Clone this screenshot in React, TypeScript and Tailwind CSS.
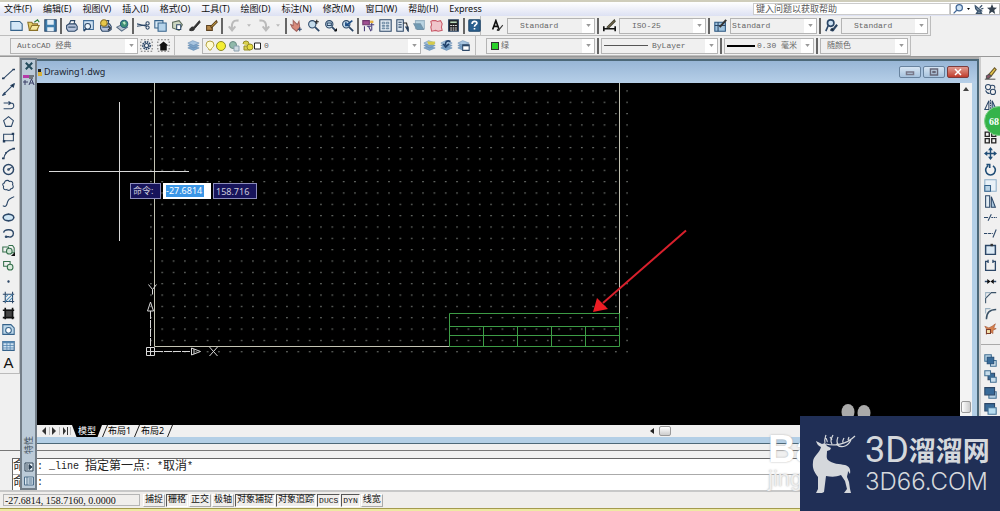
import React from "react";

type IconDef = { label: string; art: React.ReactNode };

const UI = "font-['Noto_Sans','Noto_Sans_CJK_SC',sans-serif]";
const MONO = "font-['Liberation_Mono','Noto_Sans_CJK_SC',monospace]";

function Icon({ children }: { children: React.ReactNode }) {
  return (
    <svg viewBox="0 0 16 16" className="size-[13px]" fill="none" stroke="#2c4767" strokeWidth="1.3">
      {children}
    </svg>
  );
}

function Tool({ def, wide }: { def: IconDef; wide?: boolean }) {
  return (
    <button
      aria-label={def.label}
      className={"flex h-4 shrink-0 items-center justify-center " + (wide ? "w-full" : "w-[17px]")}
    >
      <Icon>{def.art}</Icon>
    </button>
  );
}

const magnifier = (
  <>
    <circle cx="6.5" cy="6.5" r="4.5" fill="#c5dcec" />
    <path d="M10 10l5 5" strokeWidth="2.2" />
  </>
);
const printer = (
  <>
    <path d="M5 7L7 2h5l-1 5" fill="#fff" />
    <path d="M2 8l3-2h8l2 3v4l-3 2H4l-2-3z" fill="#b6c3db" />
    <path d="M4 10h9" />
  </>
);

const fileTools: IconDef[] = [
  { label: "新建", art: <path d="M1 3h11l3 3v8H1z" fill="#d4e7f7" stroke="#35628a" /> },
  {
    label: "打开",
    art: (
      <>
        <path d="M1 4h5l1 2h6v8H3z" fill="#e6cf6b" stroke="#8b7126" />
        <path d="M3 14l3-6h9l-3 6z" fill="#f6e9a0" stroke="#8b7126" />
        <path d="M9 4l4-3 2 3" stroke="#2a7a3a" />
      </>
    ),
  },
  {
    label: "保存",
    art: (
      <>
        <path d="M1 1h14v14H1z" fill="#3f7fae" />
        <path d="M4 1h8v6H4zM4 10h8v5H4z" fill="#e4eef6" stroke="none" />
      </>
    ),
  },
];
const printTools: IconDef[] = [
  { label: "打印", art: printer },
  {
    label: "打印预览",
    art: (
      <>
        <path d="M2 2h12v11H2z" fill="#cfe2f3" stroke="#3f6c97" />
        <circle cx="7" cy="9" r="3.5" fill="#eef6fc" />
        <path d="M5 12l-3 3" strokeWidth="2" />
      </>
    ),
  },
  {
    label: "发布",
    art: (
      <>
        {printer}
        <circle cx="6" cy="5" r="4" fill="#e8c84a" stroke="#8b7126" />
        <path d="M11 8l3 3-3 3" stroke="#222" />
      </>
    ),
  },
  {
    label: "三维 DWF",
    art: (
      <>
        <path d="M1 10l8-4 5 4-7 5z" fill="#b9c4d2" stroke="#5b6f86" />
        <circle cx="10" cy="6" r="4.5" fill="#3f8f76" stroke="#2a5f80" />
        <path d="M8 4l3-1 1 3-2 1z" fill="#bfe6c6" stroke="none" />
      </>
    ),
  },
];
const editTools: IconDef[] = [
  {
    label: "剪切",
    art: (
      <>
        <path d="M0 6l12 3M0 9l12-2" />
        <circle cx="13" cy="5.500" r="2" />
        <circle cx="13" cy="10.500" r="2" />
      </>
    ),
  },
  {
    label: "复制",
    art: (
      <>
        <path d="M1 2h10v9H1z" fill="#d9eaf6" stroke="#35628a" />
        <path d="M5 5h10v10H5z" fill="#b5d3ea" stroke="#35628a" />
      </>
    ),
  },
  {
    label: "粘贴",
    art: (
      <>
        <path d="M2 4l8-2 4 5-4 7-8-3z" fill="#cdd7c3" stroke="#5a6a5a" />
        <path d="M7 7h5v6H7z" fill="#fff" />
      </>
    ),
  },
  { label: "特性匹配", art: <path d="M2 14c0-3 3-5 5-4l7-8 1 2-7 8c0 2-3 3-6 2z" fill="#333" stroke="#222" strokeWidth="1" /> },
  {
    label: "块编辑器",
    art: (
      <>
        <path d="M2 8h7v6H2z" fill="#b7894a" stroke="#5b4122" />
        <path d="M7 9l7-7 1 2-7 7z" fill="#e2b53f" stroke="#5b4122" />
      </>
    ),
  },
];
const zoomTools: IconDef[] = [
  {
    label: "实时平移",
    art: (
      <>
        <path d="M4 2l5 5 2-4 1 8-4 4-5-4-2-4 3 1z" fill="#d88a7b" stroke="#a4655f" />
        <path d="M12 10v5M9.500 12.500h5" stroke="#27446b" />
      </>
    ),
  },
  { label: "实时缩放", art: <>{magnifier}<path d="M12 1v5M9.500 3.500h5" stroke="#222" /></> },
  { label: "窗口缩放", art: <>{magnifier}<path d="M4 5h5v3H4z" /><path d="M12 15h4v-4z" fill="#111" stroke="none" /></> },
  { label: "缩放上一个", art: <>{magnifier}<path d="M14 2L6 8m0-4v4h4" strokeWidth="2" stroke="#1d4d85" /></> },
];
const panelTools: IconDef[] = [
  {
    label: "特性",
    art: (
      <>
        <path d="M1 2h8v5H1z" fill="#a04f92" stroke="#6d356a" />
        <path d="M6 9h5M3 9v6M8 9l3 6M12 3v11M10 7h5" stroke="#443a78" />
        <path d="M10 2h4v3h-4z" fill="#e5b03c" stroke="none" />
      </>
    ),
  },
  {
    label: "设计中心",
    art: (
      <>
        <path d="M1 1h14v14H1z" fill="#e2eaf2" />
        <path d="M4 4h3v2H4zM9 4h3v2H9zM4 8h3v1H4zM9 8h3v1H9zM4 11h3v1H4zM9 11h3v1H9z" stroke="#4b6d8d" strokeWidth="0.9" />
      </>
    ),
  },
  {
    label: "工具选项板",
    art: (
      <>
        <path d="M1 1h8v14H1z" fill="#dbe6f0" />
        <path d="M3 4h4M3 7h4M3 10h4" />
        <path d="M9 5h4l2 9" stroke="#222" />
        <path d="M12 10h3v5z" fill="#222" />
      </>
    ),
  },
  {
    label: "图纸集",
    art: (
      <>
        <path d="M3 2h11v10H3z" fill="#b9d4e2" stroke="#9ab3c3" />
        <path d="M1 6h8l4 7H5z" fill="#6f9ab4" stroke="#7392a8" />
      </>
    ),
  },
  {
    label: "标记集",
    art: <path d="M3 2h4l2 1 4-1 2 4-1 4 1 4-5 1-3-1-5 1-1-5 1-3-1-4z" fill="#f0c5cb" stroke="#c95a69" />,
  },
  {
    label: "快速计算器",
    art: (
      <>
        <path d="M2 1h12v14H2z" fill="#222" />
        <path d="M4 3h8v2H4z" fill="#b8d8b8" stroke="none" />
        <path d="M4 8h8M4 11h8M4 13.500h8" stroke="#eee" strokeDasharray="2 1" />
      </>
    ),
  },
];

const layers = (
  <g fill="#7ba3c8" stroke="#6389b0" strokeWidth="0.7">
    <path d="M1 11l6-3 8 3-7 3z" />
    <path d="M1 8l6-3 8 3-7 3z" />
    <path d="M1 5l6-3 8 3-7 3z" fill="#a7c4df" />
  </g>
);

const drawTools: IconDef[] = [
  { label: "直线", art: <><path d="M2 14L14 3" /><path d="M0 13h3v2H0zM13 2h3v2h-3z" fill="#243c5a" stroke="none" /></> },
  { label: "构造线", art: <><path d="M1 15L15 1" /><path d="M11 3l4-2-1 4zM3 12l-2 3 3-1z" fill="#111" /></> },
  { label: "多段线", art: <path d="M2 5h9a3.500 3.500 0 010 7H4M2 12h3M8 3l3 2-3 2" /> },
  { label: "正多边形", art: <path d="M8 2l6 5-2.500 7h-7L2 7z" /> },
  { label: "矩形", art: <><path d="M2 4h12v8H2z" /><path d="M1 11h3v3H1zM12 2h3v3h-3z" fill="#243c5a" stroke="none" /></> },
  { label: "圆弧", art: <><path d="M2 15C3 8 6 4 14 2" /><path d="M0 13h3v2H0zM4 6h2v2H4zM13 1h3v2h-3z" fill="#243c5a" stroke="none" /></> },
  { label: "圆", art: <><circle cx="8" cy="8" r="6.200" strokeWidth="1.800" /><path d="M8 8l4-3" /><circle cx="8" cy="8" r="1" /></> },
  { label: "修订云线", art: <path d="M5 2c3-1 4 1 4 1 3-1 5 1 4 4 2 3 0 5-2 5-1 3-5 2-5 1-3 1-5-1-4-4-2-2-1-4 1-4 0-1 1-3 2-3z" /> },
  { label: "样条曲线", art: <path d="M1 13c4 3 5-1 6-5s5-4 8-6" /> },
  { label: "椭圆", art: <><ellipse cx="8" cy="8" rx="6.500" ry="4" fill="#cfe6f5" strokeWidth="1.800" /><path d="M8 3v2M8 11v2M1 8h1M14 8h1" strokeWidth="2" /></> },
  { label: "椭圆弧", art: <><path d="M2 7c1-5 12-5 12 1 0 4-4 5-6 4M5 12h4" strokeWidth="1.700" /><circle cx="5" cy="12" r="1" /></> },
  { label: "插入块", art: <><path d="M1 5h7v6H1zM8 3h5l2 3v6h-3" stroke="#35704c" /><circle cx="9" cy="10" r="3.500" fill="#cfe5d5" stroke="#35704c" /><path d="M11 16h5v-5z" fill="#111" stroke="none" /></> },
  { label: "创建块", art: <><path d="M2 3h8v6H2z" stroke="#35704c" /><circle cx="10" cy="10" r="3.500" fill="#dcebdd" stroke="#35704c" /></> },
  { label: "点", art: <circle cx="8" cy="8" r="0.800" fill="#111" /> },
  { label: "图案填充", art: <><path d="M4 1v14M13 1v14M1 4h14M1 13h14" /><path d="M4 8l4-4M4 13l9-9M8 13l5-5" stroke="#4889b8" /></> },
  { label: "渐变色", art: <><path d="M4 4h9v9H4z" fill="#444" /><path d="M4 1v14M13 1v14M1 4h14M1 13h14" stroke="#111" strokeWidth="2" /></> },
  { label: "面域", art: <><path d="M1 2h10l4 4v8H1z" fill="#bed8ea" stroke="#35628a" /><circle cx="8" cy="9" r="3.500" fill="#fff" stroke="#35628a" /></> },
  { label: "表格", art: <><path d="M1 3h14v11H1z" fill="#cfe2f1" stroke="#35628a" /><path d="M1 4h14" strokeWidth="2.500" stroke="#5888b2" /><path d="M1 8h14M1 11h14M6 3v11M10 3v11" stroke="#5888b2" strokeWidth="1" /></> },
];

const modifyTools: IconDef[] = [
  { label: "删除", art: <><path d="M6 9l7-8 2 2-6 8z" fill="#e8c84a" stroke="#6d5b2c" /><path d="M3 11l3-2 3 2-3 3H3z" fill="#8b5265" stroke="#555" /><path d="M1 15h13" stroke="#555" /></> },
  { label: "复制对象", art: <><circle cx="5" cy="5" r="3.200" /><circle cx="11" cy="11" r="3.200" /><path d="M8 3c5-1 6 1 5 4M2 9c1 3 2 4 5 4" /></> },
  { label: "镜像", art: <><path d="M6 2v11H1z" /><path d="M10 2v11h5z" fill="#9fbfd8" /><path d="M8 1v14" strokeDasharray="2 1" /></> },
  { label: "偏移", art: <><circle cx="8" cy="8" r="6" /><circle cx="8" cy="8" r="3" /></> },
  { label: "阵列", art: <path d="M1.500 1.500h5v5h-5zM9.500 1.500h5v5h-5zM1.500 9.500h5v5h-5zM9.500 9.500h5v5h-5z" stroke="#222" strokeWidth="1.600" /> },
  { label: "移动", art: <><path d="M8 2v12M2 8h12" stroke="#1f4d76" strokeWidth="1.800" /><path d="M8 0l3 4H5zM8 16l3-4H5zM0 8l4-3v6zM16 8l-4-3v6z" fill="#1f4d76" stroke="none" /></> },
  { label: "旋转", art: <path d="M5 3.500a6 6 0 106 0M3 2h4v4" stroke="#1f4d76" strokeWidth="2" /> },
  { label: "缩放", art: <><path d="M1 1h14v14H1z" stroke="#8fafc9" fill="#e9f1f7" /><path d="M1 8h7v7H1z" fill="#b9d3e6" stroke="#35628a" /></> },
  { label: "拉伸", art: <><path d="M2 1h5v14H2z" fill="#e2ebf2" /><path d="M9 2l5 13H9z" fill="#a9c6dc" /></> },
  { label: "修剪", art: <><path d="M0 8h5M5 12L9 4" /><path d="M9 8h7" strokeDasharray="2 1" /></> },
  { label: "延伸", art: <><path d="M11 13l4-10" /><path d="M0 8h4M5 8h6" strokeDasharray="4 1" /></> },
  { label: "打断于点", art: <><path d="M2 3h12v11H2z" fill="#dbe9f4" strokeWidth="1.800" /><path d="M8 1h3v3H8z" fill="#333" stroke="none" /></> },
  { label: "打断", art: <path d="M5 3H2v11h12V3h-3M5 1v4M11 1v4" strokeWidth="1.600" /> },
  { label: "合并", art: <><path d="M1 8h5M15 8h-5" strokeWidth="2" /><path d="M4 5l4 3-4 3zM12 5L8 8l4 3z" fill="#111" stroke="none" /></> },
  { label: "倒角", art: <><path d="M2 15V9l7-7h6" stroke="#3b5368" /><path d="M2 8V2h6" stroke="#9ab0c0" /></> },
  { label: "圆角", art: <><path d="M3 15C3 7 7 3 15 3" stroke="#3b5368" strokeWidth="1.800" /><path d="M2 8V2h6" stroke="#9ab0c0" /></> },
  { label: "分解", art: <><path d="M1 4l5 2 4-2 4-3-2 5 3 1-4 2 0 4-4-3-4 4 1-5z" fill="#d7824e" stroke="#a55a3a" strokeWidth="0.8" /><path d="M3 8h5v5H3z" fill="#f1dfa8" stroke="#7b3d2c" /></> },
];
const orderTools: IconDef[] = [
  {
    label: "前置",
    art: (
      <>
        <path d="M1 1h8v8H1z" fill="#b7d3e6" stroke="#416f92" />
        <path d="M8 8h7v7H8z" fill="#d5e5ef" stroke="#416f92" />
        <path d="M4 4h8v8H4z" fill="#386b99" stroke="#28527b" />
      </>
    ),
  },
  { label: "后置", art: <><path d="M5 4h8v8H5z" fill="#386b99" /><path d="M1 1h7v6H1zM8 9h7v6H8z" fill="#c7dcea" stroke="#416f92" /></> },
  { label: "置于对象之上", art: <><path d="M6 7h9v8H6z" fill="#b7d3e6" stroke="#416f92" /><path d="M1 2h12v9H1z" fill="#386b99" /></> },
  { label: "置于对象之下", art: <><path d="M1 2h12v9H1z" fill="#386b99" /><path d="M5 7h10v8H5z" fill="#b7dcf0" stroke="#416f92" /></> },
];

function Sep() {
  return <span className="mx-px h-4 w-0.5 shrink-0 bg-[#666]" />;
}

function Caret() {
  return (
    <svg viewBox="0 0 6 4" className="mx-1 h-[3px] w-1"><path d="M0 0h6L3 4z" fill="#bbb" /></svg>
  );
}

function Combo({
  label,
  value,
  width,
  lead,
  indent = "pl-1",
}: {
  label: string;
  value: string;
  width: string;
  lead?: React.ReactNode;
  indent?: string;
}) {
  return (
    <div className={"flex h-4 shrink-0 items-center border border-[#b4b4b4] bg-[#f0f0f0] " + width}>
      {lead}
      <select
        aria-label={label}
        className={"h-full min-w-0 flex-1 appearance-none bg-transparent text-[8px] text-[#666] outline-none " + indent + " " + MONO}
      >
        <option>{value}</option>
      </select>
      <span className="flex h-full w-3 items-center justify-center bg-white">
        <svg viewBox="0 0 6 4" className="h-[3px] w-[5px]">
          <path d="M0 0h6L3 4z" fill="#999" />
        </svg>
      </span>
    </div>
  );
}

const menus = ["文件(F)", "编辑(E)", "视图(V)", "插入(I)", "格式(O)", "工具(T)", "绘图(D)", "标注(N)", "修改(M)", "窗口(W)", "帮助(H)", "Express"];

function MenuBar() {
  return (
    <header className="flex h-[14px] items-center bg-linear-to-b from-white to-[#dde1f3]">
      <nav className="flex flex-1 items-center gap-[11px] pl-1">
        {menus.map((m) => (
          <button key={m} className="text-[9px] leading-3 whitespace-nowrap text-[#111]">
            {m}
          </button>
        ))}
      </nav>
      <input
        aria-label="搜索帮助"
        placeholder="键入问题以获取帮助"
        className="h-3 w-[197px] border border-[#ccc] bg-white pl-0.5 text-[9px] leading-3 outline-none placeholder:text-[#555]"
      />
      <div className="flex h-3 w-[50px] items-center justify-between border border-[#bbb] bg-white px-0.5">
        <button aria-label="搜索" className="flex items-center gap-1">
          <svg viewBox="0 0 16 16" className="size-[10px]" fill="#cfe3f4" stroke="#426796" strokeWidth="2">
            <circle cx="10" cy="6" r="5" />
            <path d="M6 10l-5 5" />
          </svg>
          <svg viewBox="0 0 6 4" className="h-0.5 w-[3px]"><path d="M0 0h6L3 4z" /></svg>
        </button>
        <button aria-label="通讯中心">
          <svg viewBox="0 0 16 16" className="size-[10px]" fill="none" stroke="#39526c" strokeWidth="2">
            <path d="M2 3c0 7 4 9 10 8zM7 10l-3 5h8l-2-4M9 6l4-4M11 8l4-1" fill="#879cae" />
          </svg>
        </button>
        <button aria-label="收藏夹">
          <svg viewBox="0 0 16 16" className="size-[10px]" fill="#34414f">
            <path d="M8 0l2.300 5.500L16 6l-4.400 3.700L13 16l-5-3.500L3 16l1.400-6.300L0 6l5.700-.5z" />
          </svg>
        </button>
      </div>
    </header>
  );
}

function StandardBar() {
  return (
    <div className="flex h-5 items-center">
      <div className="flex h-5 w-[481px] shrink-0 items-center border-r border-b border-[#bdbdbd] pl-2">
        {fileTools.map((d) => <Tool key={d.label} def={d} />)}
        <Sep />
        {printTools.map((d) => <Tool key={d.label} def={d} />)}
        <Sep />
        {editTools.map((d) => <Tool key={d.label} def={d} />)}
        <Sep />
        <div className="flex items-center pl-0.5">
          <Tool def={{ label: "放弃", art: <path d="M13 2C6 1 4 5 5 13M1 9l4 5 4-5" stroke="#bbb" strokeWidth="2.500" /> }} />
          <Caret />
          <Tool def={{ label: "重做", art: <path d="M3 2c7-1 9 3 8 11M7 9l4 5 4-5" stroke="#bbb" strokeWidth="2.500" /> }} />
          <Caret />
        </div>
        <Sep />
        {zoomTools.map((d) => <Tool key={d.label} def={d} />)}
        <Sep />
        {panelTools.map((d) => <Tool key={d.label} def={d} />)}
        <Sep />
        <Tool
          def={{
            label: "帮助",
            art: (
              <>
                <rect x="1" y="1" width="14" height="14" rx="1" fill="#2a608f" stroke="#1d4468" />
                <path d="M5 6c0-4 6-4 6-1 0 2-3 2-3 4.500M8 11v2" stroke="#fff" strokeWidth="2" />
              </>
            ),
          }}
        />
      </div>
      <div className="flex h-5 items-center gap-px border-r border-b border-[#bdbdbd] pr-0.5 pl-2">
        <Tool def={{ label: "文字样式", art: <><path d="M2 13L6 2l4 11M3 9h6" stroke="#111" strokeWidth="2" /><path d="M7 14c0-2 2-3 3-2l4-5 1 1-4 5c0 2-2 2-4 1z" fill="#333" stroke="none" /></> }} />
        <Combo label="文字样式" value="Standard" width="w-[88px]" indent="pl-3" />
        <Sep />
        <Tool def={{ label: "标注样式", art: <><path d="M1 9v6M15 9v6M1 12h14" stroke="#111" strokeWidth="2" /><path d="M5 10l9-9 1 2-8 8z" fill="#8b7556" stroke="#443" /></> }} />
        <Combo label="标注样式" value="ISO-25" width="w-[87px]" indent="pl-3" />
        <Sep />
        <Tool def={{ label: "表格样式", art: <><path d="M1 4h13v11H1z" fill="#9fc3df" stroke="#2a5780" /><path d="M1 8h13M5 4v11" /><path d="M7 10l8-9" strokeWidth="2.500" stroke="#333" /></> }} />
        <Combo label="表格样式" value="Standard" width="w-[87px]" indent="pl-px" />
        <Sep />
        <Tool def={{ label: "多重引线样式", art: <><circle cx="7" cy="5" r="4" fill="#cfe3f4" strokeWidth="2" /><path d="M4 8l-3 7" strokeWidth="2" /><path d="M7 14c0-2 2-3 3-2l4-5 1 1-4 5c0 2-2 2-4 1z" fill="#222" /></> }} />
        <Combo label="多重引线样式" value="Standard" width="w-[87px]" indent="pl-3" />
      </div>
    </div>
  );
}

function PropertyBar() {
  return (
    <div className="flex h-5 items-center">
      <div className="flex h-5 w-[175px] shrink-0 items-center border-r border-b border-[#bdbdbd] pl-2.5">
        <Combo label="工作空间" value="AutoCAD 经典" width="w-[128px]" indent="pl-1.5" />
        <Tool def={{ label: "工作空间设置", art: <><path d="M1 1h14v14H1z" strokeDasharray="2 2" stroke="#777" /><circle cx="8" cy="8" r="4.500" strokeWidth="2" strokeDasharray="2 1" /><circle cx="8" cy="8" r="2.500" /></> }} />
        <Tool def={{ label: "我的工作空间", art: <><path d="M1 1h14v14H1z" strokeDasharray="2 2" stroke="#777" /><path d="M8 3l6 5h-2v6H4V8H2z" fill="#111" stroke="none" /></> }} />
      </div>
      <div className="flex h-5 w-[301px] shrink-0 items-center border-r border-b border-[#bdbdbd] pl-2.5">
        <Tool def={{ label: "图层特性管理器", art: layers }} />
        <Combo
          label="图层"
          value="0"
          width="w-[219px]"
          indent="pl-px"
          lead={
            <svg viewBox="0 0 60 14" className="h-3.5 w-[60px]" fill="none">
              <path d="M6 11c0-2-3-3-3-5a4 4 0 018 0c0 2-3 3-3 5z" fill="#fffbd0" stroke="#b5a443" />
              <circle cx="18" cy="7" r="4.500" fill="#f4ee32" stroke="#8d8827" />
              <circle cx="30" cy="6" r="3.500" fill="#90b9aa" stroke="#698b84" />
              <path d="M31 7h5v5h-5z" fill="#d1dce3" stroke="#8aa0ae" />
              <path d="M40 5a3 3 0 016 0v2M41 7h6v4h-6z" fill="#d8cf4d" stroke="#968d25" />
              <circle cx="47" cy="8" r="3" fill="#e6dc3f" stroke="#968d25" />
              <path d="M51.500 4h6v6h-6z" fill="#fff" stroke="#222" />
            </svg>
          }
        />
        <Tool def={{ label: "置为当前图层", art: <>{layers}<path d="M5 3h10l-1 4H7z" fill="#d6cb4a" stroke="none" /></> }} />
        <Tool def={{ label: "上一个图层", art: <>{layers}<path d="M13 3C8 1 6 4 7 8M4 6l3 4 4-4" stroke="#1f3f6a" strokeWidth="2" /></> }} />
        <Tool def={{ label: "图层状态", art: <>{layers}<path d="M7 7h8v7H7z" fill="#fff" /><path d="M7 8h8" strokeWidth="2" /></> }} />
      </div>
      <div className="flex h-5 items-center gap-px border-r border-b border-[#bdbdbd] pr-0.5 pl-2.5">
        <Combo label="颜色" value="绿" width="w-[109px]" indent="pl-0.5" lead={<span className="ml-1 size-2 border border-[#333] bg-[#2bd22b]" />} />
        <Sep />
        <Combo label="线型" value="ByLayer" width="w-[117px]" lead={<span className="ml-0.5 h-px w-11 bg-[#555]" />} />
        <Sep />
        <Combo label="线宽" value="0.30 毫米" width="w-[90px]" indent="pl-0.5" lead={<span className="ml-0.5 h-0.5 w-7 bg-black" />} />
        <Sep />
        <Combo label="打印样式" value="随颜色" width="w-[88px]" indent="pl-1.5" />
      </div>
    </div>
  );
}

function Drawing() {
  return (
    <svg viewBox="36 83 923 342" className="absolute top-0 left-0 h-[342px] w-[923px]" fill="none">
      <defs>
        <pattern id="grid" x="150" y="79" width="11.340" height="11.340" patternUnits="userSpaceOnUse">
          <rect x="0.300" y="0" width="1.200" height="1.200" fill="#999e99" />
        </pattern>
      </defs>
      <rect x="150" y="83" width="478" height="270" fill="url(#grid)" />
      <g stroke="#c4c4b4" strokeWidth="1">
        <path d="M154.500 83v263.500h295M619.500 83v231" />
      </g>
      <g stroke="#d8d8d8">
        <path d="M119.500 102v139M49 171.500h140" />
        <path d="M150.500 311v40.500h41" strokeDasharray="8 1" />
        <path d="M146.500 347.500h8v8h-8zM146.500 351.500h8M150.500 347.500v8M147.500 311l3-9 3 9zM191.500 348l9 3.500-9 3.500zM194 349v5" />
        <path d="M148.500 284.500l4 5 4-5M152.500 289.500v5M209.500 347l8 9M217.500 347l-8 9" />
      </g>
      <g stroke="#3d9c46">
        <path d="M449.500 313.500h170v33h-170zM449.500 326.500h170M449.500 335.500h170M483.500 326v20M517.500 326v20M551.500 326v20M585.500 326v20" />
      </g>
      <path d="M686 230.500L603 303" stroke="#d8202c" strokeWidth="2" />
      <path d="M593 312l4-14 11 11z" fill="#ed1c24" />
      <ellipse cx="848" cy="412" rx="6.500" ry="8" fill="#aaa" />
      <ellipse cx="864" cy="413" rx="6.500" ry="8" fill="#aaa" />
    </svg>
  );
}

function DynamicInput() {
  return (
    <div className="absolute top-[100px] left-[94px] flex gap-0.5 text-[9px] leading-3 text-[#ccd]">
      <label htmlFor="dyn-x" className="flex h-4 w-[31px] items-center border border-[#8d8dbd] bg-[#17145b] pl-0.5">命令:</label>
      <span className="flex h-4 w-12 items-center border border-white bg-white pl-0.5">
        <input id="dyn-x" defaultValue="-27.6814" className="h-3 w-[38px] bg-[#3b96e6] text-white outline-none" />
      </span>
      <input aria-label="Y" defaultValue="158.716" className="h-4 w-11 border border-[#8d8dbd] bg-[#17145b] pl-0.5 outline-none" />
    </div>
  );
}

function WindowButton({ label, tone, d }: { label: string; tone: string; d: string }) {
  return (
    <button aria-label={label} className={"flex h-3 w-[22px] items-center justify-center rounded-[2px] border " + tone}>
      <svg viewBox="0 0 10 8" className="h-2 w-2.5" fill="none" strokeWidth="1.500" stroke="currentColor">
        <path d={d} />
      </svg>
    </button>
  );
}

function Slash() {
  return (
    <svg viewBox="0 0 6 12" className="h-3 w-1.5" stroke="#222"><path d="M0.500 12L5.500 0" /></svg>
  );
}

function DrawingWindow() {
  return (
    <main className="flex min-w-0 flex-1 flex-col border-t-2 border-r-2 border-b border-[#4c6878] bg-[#b3cfe6]">
      <div className="flex h-[22px] items-center bg-linear-to-b from-[#98b6d6] to-[#b6cfe8] pr-2 pl-[18px]">
        <svg viewBox="0 0 5 10" className="h-2.5 w-[5px]"><path d="M0 2h3v3H0z" fill="#222" /><path d="M0 5h4v4H0z" fill="#d9b23c" /></svg>
        <h1 className="ml-px flex-1 text-[9px] text-[#1b2633]">Drawing1.dwg</h1>
        <div className="flex gap-0.5">
          <WindowButton label="最小化" tone="border-[#68839f] bg-linear-to-b from-[#d6e5f3] to-[#a7c3de] text-[#778]" d="M1.500 4h7v2.500h-7z" />
          <WindowButton label="最大化" tone="border-[#68839f] bg-linear-to-b from-[#d6e5f3] to-[#a7c3de] text-[#667]" d="M1.500 1h7v6h-7zM4 3.500h2v1H4z" />
          <WindowButton label="关闭" tone="border-[#7d3b3b] bg-linear-to-b from-[#e09a90] to-[#bf3a2c] text-white" d="M2 1l6 6M8 1L2 7" />
        </div>
      </div>
      <div className="mr-[5px] ml-4 flex flex-1">
        <div className="relative min-w-0 flex-1 overflow-hidden bg-black">
          <Drawing />
          <DynamicInput />
        </div>
        <div className="flex w-3 flex-col items-center justify-between bg-[#f3f3f3] py-1">
          <svg viewBox="0 0 6 4" className="h-1 w-1.5"><path d="M0 4h6L3 0z" fill="#444" /></svg>
          <span className="mb-2 h-3 w-2.5 rounded-[2px] border border-[#999] bg-linear-to-r from-white to-[#ccc]" />
        </div>
      </div>
      <div className="mr-[5px] mb-1.5 ml-4 flex h-3 bg-[#f0f0f0] pl-1 text-[9px] leading-3">
        <div className="flex w-8 items-center justify-around">
          {["M5 0v8L1 4z", "M1 0v8l4-4z", "M1 0v8l3-4zM5 0h1v8H5z"].map((d) => (
            <button key={d} aria-label="切换布局" className="border-r border-[#bbb] pr-0.5">
              <svg viewBox="0 0 6 8" className="h-2 w-1.5"><path d={d} fill="#333" /></svg>
            </button>
          ))}
        </div>
        <button className="h-3 w-[30px] bg-black text-center text-white [clip-path:polygon(0_0,100%_0,85%_100%,15%_100%)]">模型</button>
        <Slash />
        <button className="w-[26px] text-left">布局1</button>
        <Slash />
        <button className="ml-px w-[26px] text-left">布局2</button>
        <Slash />
        <div className="ml-[469px] flex h-3 w-[29px] items-center justify-between">
          <svg viewBox="0 0 4 6" className="ml-2 h-1.5 w-1"><path d="M4 0v6L0 3z" fill="#222" /></svg>
          <span className="h-2.5 w-3 rounded-[2px] border border-[#999] bg-linear-to-b from-white to-[#ccc]" />
        </div>
      </div>
    </main>
  );
}

function Palette() {
  return (
    <aside className="absolute top-[58px] bottom-[21px] left-5 flex w-[17px] flex-col items-center border-2 border-[#737e88] bg-[#bccbd8]">
      <button aria-label="关闭选项板" className="mt-0.5">
        <svg viewBox="0 0 10 10" className="size-2" stroke="#234b5c" strokeWidth="2.500"><path d="M1 1l8 8M9 1L1 9" /></svg>
      </button>
      <svg viewBox="0 0 12 12" className="mt-1 size-3" fill="none" stroke="#3a3f66">
        <path d="M0 1h6v3H0z" fill="#b63aa8" stroke="none" />
        <path d="M6 2h5M6 4h4" stroke="#222" />
        <path d="M2 6v5M0 8h5M6 11l2.500-6 2.500 6M7 9h3" />
      </svg>
      <span className="mt-auto rotate-180 text-[9px] leading-[12px] text-[#44525e] [text-orientation:sideways] [writing-mode:vertical-rl]">特性</span>
      <button aria-label="自动隐藏" className="mt-2">
        <svg viewBox="0 0 10 10" className="size-2.5" fill="#e3edf5" stroke="#2c4053"><path d="M1 1h8v8H1z" /><path d="M3 2v6M5 2.500v5L8 5z" fill="#2c4053" /></svg>
      </button>
      <button aria-label="选项板菜单" className="mt-1 mb-0.5">
        <svg viewBox="0 0 10 10" className="size-2.5" fill="#dce8f1" stroke="#4e6e8a"><path d="M0.500 1h9v8h-9zM3 1v8M4.500 3h4M4.500 5h4M4.500 7h4" /></svg>
      </button>
    </aside>
  );
}

function CommandArea() {
  return (
    <section className={"bg-[#f0f0f0] pt-1.5 text-[10px] text-[#222] " + MONO}>
      <div className="h-px bg-[#777]" />
      <div className="mt-[7px] ml-3 border-t border-l border-[#666] bg-white">
        <div className="flex h-4 items-center border-b border-[#aaa] whitespace-pre">
          <span className="w-6 text-[12px]">命</span>
          <span>: _line </span>
          <span className="text-[12px]">指定第一点</span>
          <span>: *</span>
          <span className="text-[12px]">取消</span>
          <span>*</span>
        </div>
        <label className="flex h-[15px] items-center">
          <span className="w-6 text-[12px]">命</span>
          <span>:</span>
          <input aria-label="命令" className="h-3 min-w-0 flex-1 outline-none" />
        </label>
      </div>
    </section>
  );
}

const modes: [string, boolean][] = [
  ["捕捉", false],
  ["栅格", true],
  ["正交", false],
  ["极轴", false],
  ["对象捕捉", true],
  ["对象追踪", true],
  ["DUCS", true],
  ["DYN", true],
  ["线宽", false],
];

function StatusBar() {
  return (
    <footer className="flex h-[18px] items-center border-t-2 border-[#c8c8c8] bg-[#f0eeec] text-[#111]">
      <output className="ml-[3px] flex h-3 w-[137px] items-center border border-[#b5b5b5] pl-px font-['Liberation_Serif',serif] text-[10px]">
        -27.6814, 158.7160, 0.0000
      </output>
      <div className={"ml-[3px] flex gap-px " + MONO}>
        {modes.map(([name, on]) => (
          <button
            key={name}
            aria-pressed={on}
            className={
              "flex h-[13px] items-center border px-px leading-[11px] " +
              (/^[A-Z]/.test(name) ? "text-[8px] " : "text-[9px] ") +
              (on ? "border-t-[#555] border-r-white border-b-white border-l-[#555]" : "border-t-white border-r-[#aaa] border-b-[#aaa] border-l-white")
            }
          >
            {name}
          </button>
        ))}
      </div>
    </footer>
  );
}

function Brand() {
  return (
    <div className="absolute right-0 bottom-0 flex h-[95px] w-[200px] items-center bg-[#202f56] pl-3 text-[#d5d8dc]">
      <svg viewBox="0 0 45 60" className="h-[60px] w-[45px] shrink-0" fill="#d5d8dc">
        <path d="M4 7l6 3 3-1 2 3 4 2-1 2-3 1c0 4-1 7 1 9 4 4 12 4 17 5 4 1 6 4 5 9l-2-3c0 3-1 4-1 6l2 5 1 7 1 4h-7l3-4-2-8-4-6c-5 2-9 2-15 1l-1 8-1 8-2 1H4l2-4 0-12C3 39 0 35 1 28c0-6 7-9 8-15C6 12 5 10 4 7z" />
        <path d="M14 10c8 2 20 1 29-8M13 9c-1-3 0-5 1-8M15 8c1-1-1-3-1-4M20 10c-2-3-1-5 1-9M26 10c-2-2-1-4 0-7M31 9c-1-2 0-3 1-5M24 10c4 4 11 4 15-4M20 6l-2-3M36 6l1-3" fill="none" stroke="#d5d8dc" strokeWidth="1.200" />
      </svg>
      <div className="ml-2 flex flex-1 flex-col gap-1 whitespace-nowrap">
        <div className="flex h-8 items-center">
          <span className="font-['Roboto',sans-serif] text-[36px] leading-8">3D</span>
          <span className="font-['Noto_Sans_CJK_SC',sans-serif] text-[27px] leading-8 font-bold">溜溜网</span>
        </div>
        <span className="font-['Inter',sans-serif] text-[24px] leading-6 font-light">3D66.COM</span>
      </div>
    </div>
  );
}

export default function App() {
  return (
    <div className={"relative flex min-h-screen flex-col overflow-hidden bg-[#f0f0f0] " + UI}>
      <div className="h-0.5 bg-[#cfcdbb]" />
      <MenuBar />
      <StandardBar />
      <PropertyBar />
      <div className="flex flex-1 border-t border-[#999]">
        <div className="flex w-5 shrink-0 flex-col self-start border-r border-b border-[#bbb] pt-2 pr-0.5">
          {drawTools.map((d) => <Tool key={d.label} def={d} wide />)}
          <button aria-label="多行文字" className="h-5 text-center font-['Liberation_Sans',sans-serif] text-[15px] leading-4 text-[#111]">A</button>
        </div>
        <div className="flex min-w-0 flex-1 bg-[#ababab] pt-0.5">
          <DrawingWindow />
        </div>
        <div className="flex w-[21px] shrink-0 flex-col border-l-2 border-[#ccc] pt-2">
          {modifyTools.map((d) => <Tool key={d.label} def={d} wide />)}
          <span className="my-[7px] h-px shrink-0 bg-[#aaa]" />
          {orderTools.map((d) => <Tool key={d.label} def={d} wide />)}
        </div>
      </div>
      <CommandArea />
      <StatusBar />
      <div className="h-[3px] border-t border-[#a49b4e] bg-[#eee9a2]" />
      <Palette />
      <div className="absolute top-[106px] -right-3.5 flex size-[30px] items-center rounded-full border border-[#7fd08a] bg-[#35b34a] pl-1 font-['Liberation_Serif',serif] text-[10px] font-bold text-white">68</div>
      <div className="absolute right-[172px] bottom-5 w-[60px] font-['Liberation_Sans',sans-serif] text-[#fff] [text-shadow:0_0_2px_#aaa]">
        <div className="text-[38px] leading-9 font-bold">Bai</div>
        <div className="text-[22px] leading-6 text-[#eee]">jingy</div>
      </div>
      <Brand />
    </div>
  );
}
